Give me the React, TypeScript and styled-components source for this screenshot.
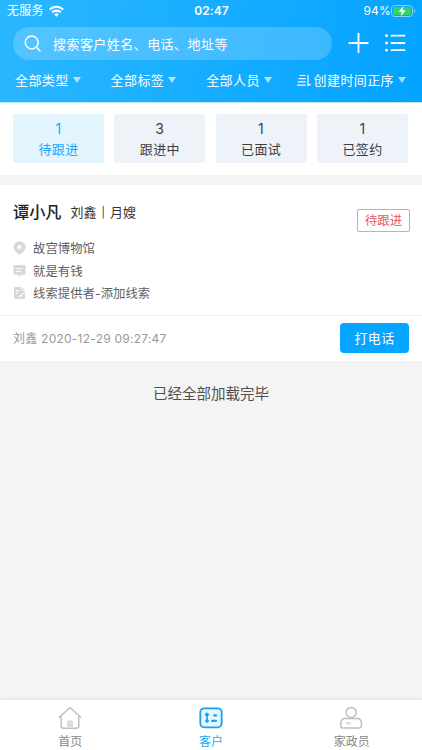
import * as React from 'react';
import styled, { createGlobalStyle } from 'styled-components';

const GlobalStyle = createGlobalStyle`
  * {
    box-sizing: border-box;
  }
  body {
    margin: 0;
    background-color: #f4f4f4;
    font-family: Inter, "Noto Sans CJK SC", sans-serif;
    color: #333;
  }
  svg {
    display: block;
    flex: none;
  }
`

const Page = styled.div`
  width: 422px;
  height: 750px;
  display: flex;
  flex-direction: column;
  overflow: hidden;
`

const Header = styled.header`
  height: 103px;
  border-bottom: 1px solid #b9ecff;
  background: linear-gradient(100deg, #2bb7ff 0%, #17adff 50%, #03a3ff 100%);
  color: white;
`

const StatusBar = styled.div`
  height: 22px;
  padding: 0 6px 0 7px;
  display: grid;
  grid-template-columns: 1fr auto 1fr;
  align-items: center;
  font-size: 12px;
  letter-spacing: 0.2px;
  line-height: 22px;
`

const Carrier = styled.div`
  display: flex;
  align-items: center;
  gap: 5px;
`

const Clock = styled.div`
  font-weight: 600;
  font-size: 12px;
  letter-spacing: 0.1px;
`

const Power = styled.div`
  display: flex;
  align-items: center;
  justify-content: flex-end;
  font-size: 12px;
`

const SearchRow = styled.div`
  height: 43px;
  padding: 5px 16px 5px 13px;
  display: flex;
  align-items: center;
`

const SearchBox = styled.div`
  width: 319px;
  height: 33px;
  padding-left: 11px;
  border-radius: 17px;
  background-color: rgba(255, 255, 255, 0.2);
  display: flex;
  align-items: center;
  gap: 12px;
  font-size: 13px;
  letter-spacing: 0.45px;
`

const HeaderActions = styled.div`
  flex: 1;
  display: flex;
  justify-content: space-between;
  padding: 0 0 1px 16px;
`

const Filters = styled.div`
  height: 30px;
  padding: 0 16px 0 15px;
  display: flex;
  align-items: center;
`

const Filter = styled.div`
  display: flex;
  align-items: center;
  font-size: 13px;
  letter-spacing: 0.4px;
  line-height: 20px;
  white-space: nowrap;
  & + & {
    margin-left: 30px;
  }
  &&:last-child {
    margin-left: auto;
  }
`

const Caret = styled.i`
  margin-left: 4px;
  border: 4.5px solid transparent;
  border-top: 6px solid rgba(255, 255, 255, 0.65);
  border-bottom: 0;
`

const Stats = styled.div`
  height: 72px;
  padding: 11px 14px 12px 13px;
  background-color: white;
  display: flex;
  gap: 10.3px;
`

const Stat = styled.div<{ $active?: boolean }>`
  flex: 1;
  height: 49px;
  border-radius: 2px;
  text-align: center;
  font-size: 13px;
  letter-spacing: 0.4px;
  line-height: 20px;
  padding-top: 5px;
  color: ${(props) => (props.$active ? '#1aa5f8' : '#3c3e42')};
  background-color: ${(props) => (props.$active ? '#e2f5ff' : '#eef3fa')};
`

const StatCount = styled.div`
  font-size: 14px;
`

const Customer = styled.div`
  height: 176px;
  margin-top: 10px;
  background-color: white;
`

const CustomerBody = styled.div`
  height: 131px;
  padding: 14px 12px 0 13px;
  display: flex;
  justify-content: space-between;
  border-bottom: 1px solid #eee;
`

const CustomerTitle = styled.div`
  display: flex;
  align-items: center;
  height: 24px;
  margin-bottom: 14px;
  font-size: 13px;
`

const CustomerName = styled.span`
  margin-right: 9px;
  font-size: 16.2px;
  font-weight: 500;
  color: #222;
`

const Separator = styled.span`
  margin: 2px 5px 0;
  font-size: 10.5px;
`

const Detail = styled.div`
  height: 22.6px;
  display: flex;
  align-items: center;
  gap: 7px;
  font-size: 12.4px;
  color: #606060;
`

const Tag = styled.div`
  width: 53px;
  height: 23px;
  margin-top: 10px;
  border: 1px solid #f39a9e;
  border-radius: 2px;
  text-align: center;
  font-size: 12.3px;
  line-height: 21px;
  color: #e8585e;
`

const CustomerFooter = styled.div`
  height: 45px;
  padding: 0 13px 2px;
  display: flex;
  align-items: center;
  justify-content: space-between;
  font-size: 12px;
  letter-spacing: 0.24px;
  color: #999;
`

const CallButton = styled.button`
  width: 69px;
  height: 30px;
  padding: 0;
  border: 0;
  border-radius: 4px;
  background-color: #06a5ff;
  color: white;
  font-family: inherit;
  font-size: 13px;
  letter-spacing: 0.3px;
`

const LoadedText = styled.div`
  flex: 1;
  padding-top: 22px;
  text-align: center;
  font-size: 14.5px;
  line-height: 22px;
  color: #505050;
`

const TabBar = styled.nav`
  height: 50px;
  padding-top: 6px;
  display: flex;
  background-color: white;
  box-shadow: 0 -1px 5px rgba(0, 0, 0, 0.08);
`

const Tab = styled.div<{ $active?: boolean }>`
  flex: 1;
  display: flex;
  flex-direction: column;
  align-items: center;
  gap: 1px;
  font-size: 12px;
  line-height: 22px;
  color: ${(props) => (props.$active ? '#26a5f3' : '#888')};
`

const WifiIcon = () => (
  <svg width="15" height="12" viewBox="0 0 14 11" fill="none" stroke="white" strokeWidth="1.9">
    <path d="M0.7 4.2C4.2 0.7 9.8 0.7 13.3 4.2" />
    <path d="M3 6.8C5.2 4.6 8.8 4.6 11 6.8" />
    <path d="M7 10.8L4.8 8.5C6 7.4 8 7.4 9.2 8.5Z" fill="white" stroke="none" />
  </svg>
)

const BatteryIcon = () => (
  <svg width="25" height="12" viewBox="0 0 25 12">
    <rect x="0.5" y="0.5" width="21" height="11" rx="3" fill="none" stroke="#7fd2ff" />
    <rect x="2" y="2" width="18" height="8" rx="1.5" fill="#35cf6b" />
    <path d="M23 4V8C24.6 7.4 24.6 4.6 23 4Z" fill="#7fd2ff" />
    <path d="M12.6 0.8L7.6 6.7H10.8L9.7 11.2L14.8 5.2H11.5Z" fill="white" />
  </svg>
)

const SearchIcon = () => (
  <svg width="17" height="17" viewBox="0 0 17 17" fill="none" stroke="white" strokeWidth="1.5" strokeLinecap="round">
    <circle cx="7.7" cy="7.5" r="6.4" />
    <path d="M12.4 12.3L16 16" />
  </svg>
)

const PlusIcon = () => (
  <svg width="21" height="20" viewBox="0 0 21 20" stroke="white" strokeWidth="1.8">
    <path d="M0.5 10H20.5M10.5 0V20" />
  </svg>
)

const ListIcon = () => (
  <svg width="21" height="20" viewBox="0 0 21 20" stroke="white" strokeWidth="1.8" strokeLinecap="round">
    <path d="M6.5 2.7H19.5M6.5 10H19.5M6.5 17.2H19.5" />
    <path d="M1.5 2.7H1.6M1.5 10H1.6M1.5 17.2H1.6" strokeWidth="2.8" />
  </svg>
)

const SortIcon = () => (
  <svg width="17" height="13" viewBox="0 0 17 13" fill="none" stroke="white" strokeWidth="1.2">
    <path d="M2.5 1.5H8.6M1.7 4.7H8.6M0.8 7.9H8.6M0 11.1H8.6M11 0.8V11.4L13.8 10.4" />
  </svg>
)

const PinIcon = () => (
  <svg width="13" height="14" viewBox="0 0 13 14">
    <path
      fill="#d8d8d8"
      fillRule="evenodd"
      d="M6.5 0.4C3 0.4 0.4 2.9 0.4 6C0.4 9.1 3.6 11.6 6.5 13.8C9.4 11.6 12.6 9.1 12.6 6C12.6 2.9 10 0.4 6.5 0.4ZM6.5 4A2.1 2.1 0 1 1 6.5 8.2A2.1 2.1 0 1 1 6.5 4Z"
    />
  </svg>
)

const MessageIcon = () => (
  <svg width="13" height="14" viewBox="0 0 13 14">
    <path d="M1.3 1H11.7Q12.5 1 12.5 1.8V10Q12.5 10.8 11.7 10.8H8L6.5 13L5 10.8H1.3Q0.5 10.8 0.5 10V1.8Q0.5 1 1.3 1Z" fill="#d8d8d8" />
    <path d="M3.2 4.7H9.8M3.2 7.4H8" stroke="white" />
  </svg>
)

const NoteIcon = () => (
  <svg width="13" height="14" viewBox="0 0 13 14">
    <path d="M2 1H8.4L12 4.2V12Q12 13 11 13H2Q1 13 1 12V2Q1 1 2 1Z" fill="#d8d8d8" />
    <path d="M3 4.9H6M3 7.4H5M5.5 11L12.3 6.4" stroke="white" strokeWidth="1.1" fill="none" />
    <path d="M8.4 1V4.4H12" stroke="white" strokeWidth="0.7" fill="none" />
  </svg>
)

const HomeIcon = () => (
  <svg width="24" height="24" viewBox="0 0 24 24" fill="none" stroke="#bfbfbf" strokeWidth="1.5" strokeLinecap="round" strokeLinejoin="round">
    <path d="M1.4 11.3L11.2 2.2Q12 1.5 12.8 2.2L22.6 11.3" />
    <path d="M3.2 10V20Q3.2 22.2 5.4 22.2H18.6Q20.8 22.2 20.8 20V10" />
    <path d="M9 22V16Q9 14.2 10.8 14.2H13.2Q15 14.2 15 16V22Z" fill="#dcdcdc" stroke="none" />
  </svg>
)

const CustomersIcon = () => (
  <svg width="24" height="24" viewBox="0 0 24 24" fill="none" stroke="#1a9fee" strokeLinecap="round">
    <rect x="1.3" y="2.3" width="21.4" height="19" rx="4" fill="#e5f6ff" strokeWidth="1.8" />
    <path d="M8 9V15" strokeWidth="1.6" />
    <circle cx="8" cy="8.6" r="1.5" fill="#1a9fee" strokeWidth="1" />
    <circle cx="8" cy="15" r="1.3" fill="#1a9fee" strokeWidth="1" />
    <path d="M15.3 9.4H17M13.2 14.9H17" strokeWidth="2.2" />
  </svg>
)

const StaffIcon = () => (
  <svg width="24" height="24" viewBox="0 0 24 24" fill="none" stroke="#bfbfbf" strokeWidth="1.5">
    <circle cx="11.2" cy="6.4" r="5" />
    <path d="M4.4 12.6H17.9Q21.4 13.1 21.4 17.6V20.3Q21.4 22 19.7 22H2.5Q0.8 22 0.8 20.3V17.6Q0.8 13.1 4.4 12.6Z" />
    <path d="M5.8 17.2H10.8" stroke="#dcdcdc" strokeWidth="2.6" />
  </svg>
)

const filters = ['全部类型', '全部标签', '全部人员']

const stats = [
  { label: '待跟进', count: 1 },
  { label: '跟进中', count: 3 },
  { label: '已面试', count: 1 },
  { label: '已签约', count: 1 },
]

export default function App() {
  return (
    <Page>
      <GlobalStyle />
      <Header>
        <StatusBar>
          <Carrier>无服务<WifiIcon /></Carrier>
          <Clock>02:47</Clock>
          <Power>94%<BatteryIcon /></Power>
        </StatusBar>
        <SearchRow>
          <SearchBox><SearchIcon />搜索客户姓名、电话、地址等</SearchBox>
          <HeaderActions>
            <PlusIcon />
            <ListIcon />
          </HeaderActions>
        </SearchRow>
        <Filters>
          {filters.map((label) => (
            <Filter key={label}>{label}<Caret /></Filter>
          ))}
          <Filter><SortIcon />创建时间正序<Caret /></Filter>
        </Filters>
      </Header>
      <Stats>
        {stats.map((stat, index) => (
          <Stat key={stat.label} $active={index === 0}>
            <StatCount>{stat.count}</StatCount>
            {stat.label}
          </Stat>
        ))}
      </Stats>
      <Customer>
        <CustomerBody>
          <div>
            <CustomerTitle>
              <CustomerName>谭小凡</CustomerName>
              刘鑫<Separator>|</Separator>月嫂
            </CustomerTitle>
            <Detail><PinIcon />故宫博物馆</Detail>
            <Detail><MessageIcon />就是有钱</Detail>
            <Detail><NoteIcon />线索提供者-添加线索</Detail>
          </div>
          <Tag>待跟进</Tag>
        </CustomerBody>
        <CustomerFooter>
          <span>刘鑫 2020-12-29 09:27:47</span>
          <CallButton>打电话</CallButton>
        </CustomerFooter>
      </Customer>
      <LoadedText>已经全部加载完毕</LoadedText>
      <TabBar>
        <Tab><HomeIcon />首页</Tab>
        <Tab $active><CustomersIcon />客户</Tab>
        <Tab><StaffIcon />家政员</Tab>
      </TabBar>
    </Page>
  );
}
